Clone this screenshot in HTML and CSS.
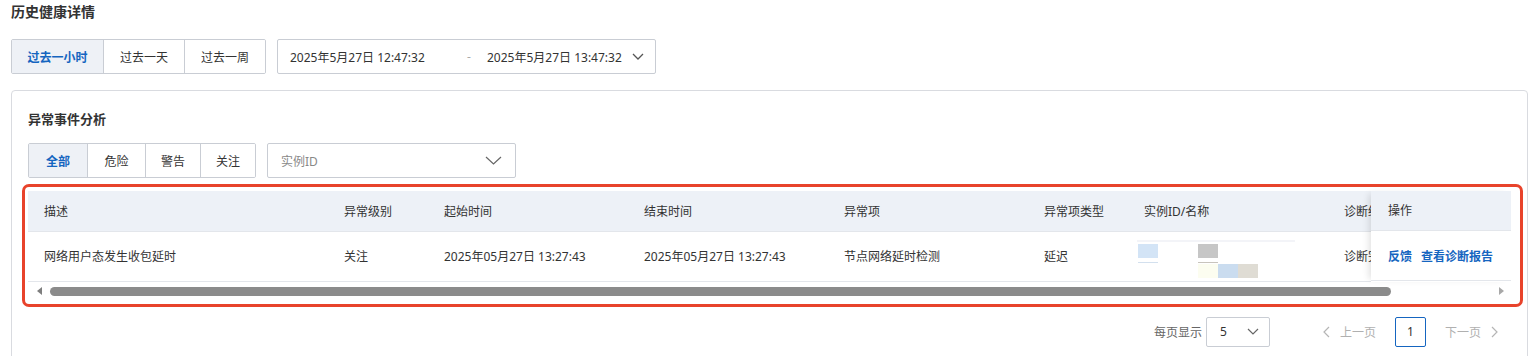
FILE: index.html
```html
<!DOCTYPE html>
<html lang="zh-CN">
<head>
<meta charset="utf-8">
<title>历史健康详情</title>
<link rel="stylesheet" href="styles.css">
</head>
<body>
<div class="page">
  <h2 class="page-title">历史健康详情</h2>

  <div class="toolbar">
    <div class="seg">
      <button class="seg-btn seg-wide active">过去一小时</button>
      <button class="seg-btn seg-mid">过去一天</button>
      <button class="seg-btn seg-mid">过去一周</button>
    </div>
    <div class="range">
      <span class="range-start">2025年5月27日 12:47:32</span>
      <span class="range-sep">-</span>
      <span class="range-end">2025年5月27日 13:47:32</span>
      <svg class="chev-sm" width="12" height="7" viewBox="0 0 12 7"><path d="M1 1 L6 6 L11 1" fill="none" stroke="#555" stroke-width="1.3"/></svg>
    </div>
  </div>

  <section class="card">
    <h3 class="card-title">异常事件分析</h3>

    <div class="filters">
      <div class="seg seg-filter">
        <button class="seg-btn f1 active">全部</button>
        <button class="seg-btn f2">危险</button>
        <button class="seg-btn f3">警告</button>
        <button class="seg-btn f4">关注</button>
      </div>
      <div class="select-id">
        <span class="placeholder">实例ID</span>
        <svg width="17" height="9" viewBox="0 0 17 9"><path d="M1 1 L8.5 8 L16 1" fill="none" stroke="#666" stroke-width="1.2"/></svg>
      </div>
    </div>

    <div class="table-zone">
      <div class="grid-wrap">
        <div class="scroll">
          <table class="tbl">
            <colgroup>
              <col style="width:300px"><col style="width:100px"><col style="width:200px"><col style="width:200px"><col style="width:200px"><col style="width:100px"><col style="width:200px"><col style="width:200px">
            </colgroup>
            <thead>
              <tr><th>描述</th><th>异常级别</th><th>起始时间</th><th>结束时间</th><th>异常项</th><th>异常项类型</th><th>实例ID/名称</th><th>诊断结果</th></tr>
            </thead>
            <tbody>
              <tr>
                <td>网络用户态发生收包延时</td>
                <td>关注</td>
                <td>2025年05月27日 13:27:43</td>
                <td>2025年05月27日 13:27:43</td>
                <td>节点网络延时检测</td>
                <td>延迟</td>
                <td class="mosaic-cell">
                  <svg class="mosaic" width="160" height="40" viewBox="0 0 160 40">
                    <rect x="0" y="0" width="158" height="2" fill="#f3f4f8"/>
                    <rect x="1" y="4" width="20" height="14" fill="#d3e4f6"/>
                    <rect x="61" y="4" width="20" height="14" fill="#c6c6c6"/>
                    <rect x="1" y="22" width="20" height="1" fill="#d3e0ee"/>
                    <rect x="61" y="22" width="20" height="1" fill="#c8c4bc"/>
                    <rect x="61" y="24" width="20" height="14" fill="#fcfdf0"/>
                    <rect x="81" y="24" width="20" height="14" fill="#cadcef"/>
                    <rect x="101" y="24" width="20" height="14" fill="#dfdcd4"/>
                  </svg>
                </td>
                <td>诊断完成</td>
              </tr>
            </tbody>
          </table>
        </div>
        <div class="fixed-col">
          <div class="fixed-head">操作</div>
          <div class="fixed-cell"><a class="lnk">反馈</a><a class="lnk">查看诊断报告</a></div>
        </div>
      </div>
      <div class="hscroll">
        <span class="arrow-l"></span>
        <div class="track"><div class="thumb"></div></div>
        <span class="arrow-r"></span>
      </div>
      <div class="highlight"></div>
    </div>

    <div class="pager">
      <span class="pager-label">每页显示</span>
      <div class="page-size">
        <span>5</span>
        <svg width="12" height="7" viewBox="0 0 12 7"><path d="M1 1 L6 6 L11 1" fill="none" stroke="#666" stroke-width="1.2"/></svg>
      </div>
      <span class="pg-nav prev">
        <svg width="7" height="12" viewBox="0 0 7 12"><path d="M6 1 L1 6 L6 11" fill="none" stroke="#b5b5b5" stroke-width="1.2"/></svg>
        上一页
      </span>
      <span class="pg-num">1</span>
      <span class="pg-nav next">
        下一页
        <svg width="7" height="12" viewBox="0 0 7 12"><path d="M1 1 L6 6 L1 11" fill="none" stroke="#b5b5b5" stroke-width="1.2"/></svg>
      </span>
    </div>
  </section>
</div>
</body>
</html>
```

FILE: styles.css
```css
* { box-sizing: border-box; }
html, body { margin: 0; padding: 0; background: #fff; }
body {
  font-family: "Noto Sans", "Noto Sans CJK SC", sans-serif;
  font-size: 12px;
  color: #333;
}
.page { padding: 0 11px; }

.page-title {
  margin: 0;
  padding-top: 1px;
  font-size: 14px;
  line-height: 22px;
  font-weight: 700;
  color: #333;
}

.toolbar {
  margin-top: 16px;
  display: flex;
  gap: 11px;
  height: 35px;
}

.seg {
  display: flex;
  border: 1px solid #c9cdd4;
  border-radius: 2px;
  overflow: hidden;
  background: #fff;
}
.seg-btn {
  font: inherit;
  color: #333;
  background: #fff;
  border: 0;
  border-left: 1px solid #c9cdd4;
  padding: 0;
  margin: 0;
  cursor: pointer;
}
.seg-btn:first-child { border-left: 0; }
.seg-btn.active { background: #eef1f6; color: #1565c0; font-weight: 700; }
.seg-wide { width: 91px; }
.seg-mid { width: 81px; }

.range {
  width: 379px;
  border: 1px solid #c9cdd4;
  border-radius: 2px;
  display: flex;
  align-items: center;
  padding-left: 12px;
  padding-right: 11px;
}
.range-start { width: 177px; }
.range-sep { width: 20px; color: #aaa; }
.range-end { flex: 1; }
.chev-sm { display: block; }

.card {
  margin-top: 16px;
  border: 1px solid #d9dbe0;
  border-radius: 4px;
  padding: 0 16px 20px;
}
.card-title {
  margin: 0;
  padding-top: 18px;
  font-size: 13px;
  line-height: 20px;
  font-weight: 700;
  color: #333;
}

.filters {
  margin-top: 14px;
  display: flex;
  gap: 11px;
  height: 35px;
}
.f1 { width: 58px; }
.f2 { width: 58px; }
.f3 { width: 55px; }
.f4 { width: 55px; }

.select-id {
  width: 249px;
  border: 1px solid #c9cdd4;
  border-radius: 2px;
  display: flex;
  align-items: center;
  justify-content: space-between;
  padding: 0 13px 0 13px;
}
.placeholder { color: #888; }
.select-id svg { display: block; }

.table-zone {
  position: relative;
  margin-top: 13px;
}
.grid-wrap { display: flex; }
.scroll { flex: 1; overflow: hidden; min-width: 0; }
.tbl {
  border-collapse: collapse;
  table-layout: fixed;
  width: 1500px;
}
.tbl th, .tbl td {
  text-align: left;
  padding: 0 0 0 16px;
  white-space: nowrap;
  overflow: hidden;
  border-bottom: 1px solid #e3e6eb;
}
.tbl th {
  height: 40px;
  font-weight: 400;
  background: #edf1f7;
  color: #333;
}
.tbl td { height: 50px; vertical-align: middle; }
.tbl td.mosaic-cell { vertical-align: top; padding: 8px 0 0 9px; }
.mosaic { display: block; }

.fixed-col {
  width: 140px;
  position: relative;
  z-index: 1;
  background: #fff;
  box-shadow: -5px 0 7px -3px rgba(0, 0, 0, 0.12);
}
.fixed-head {
  height: 40px;
  line-height: 39px;
  padding-left: 17px;
  background: #edf1f7;
  border-bottom: 1px solid #e3e6eb;
}
.fixed-cell {
  height: 50px;
  display: flex;
  align-items: center;
  gap: 9px;
  padding-left: 17px;
  border-bottom: 1px solid #e3e6eb;
}
.lnk { color: #1565c0; font-weight: 700; cursor: pointer; }

.hscroll {
  height: 19px;
  display: flex;
  align-items: center;
  background: #fff;
}
.arrow-l, .arrow-r { width: 0; height: 0; border-top: 4px solid transparent; border-bottom: 4px solid transparent; }
.arrow-l { border-right: 5px solid #7e7e7e; margin-left: 9px; margin-right: 8px; }
.arrow-r { border-left: 5px solid #a8a8a8; margin-left: 10px; margin-right: 7px; }
.track { flex: 1; height: 9px; }
.thumb { width: 1341px; height: 9px; border-radius: 5px; background: #8b8b8b; }

.highlight {
  position: absolute;
  left: -6px;
  top: -7px;
  right: -12px;
  bottom: -6px;
  border: 3px solid #e8432b;
  border-radius: 7px;
  pointer-events: none;
}

.pager {
  margin-top: 16px;
  display: flex;
  align-items: center;
  justify-content: flex-end;
  height: 30px;
  padding-right: 13px;
  color: #333;
}
.pager-label { color: #666; margin-right: 4px; }
.page-size {
  width: 64px;
  height: 30px;
  border: 1px solid #c9cdd4;
  border-radius: 2px;
  display: flex;
  align-items: center;
  justify-content: space-between;
  padding: 0 10px 0 13px;
  margin-right: 53px;
}
.page-size svg { display: block; }
.pg-nav { color: #b0b0b0; display: flex; align-items: center; gap: 10px; }
.pg-num {
  width: 31px;
  height: 30px;
  border: 1px solid #1565c0;
  border-radius: 2px;
  display: flex;
  align-items: center;
  justify-content: center;
  margin: 0 19px;
}
```
